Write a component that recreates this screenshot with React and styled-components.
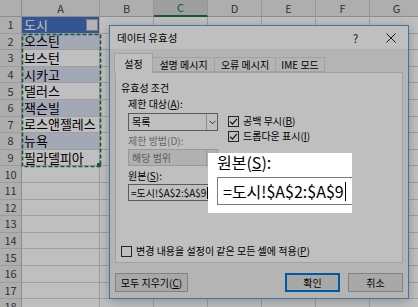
import React from 'react';
import styled, {createGlobalStyle} from 'styled-components';

const GlobalStyle = createGlobalStyle`
	html, body {
		margin: 0;
		padding: 0;
		background: #fff;
	}
	body {
		font-family: "Noto Sans CJK KR", "Noto Sans", sans-serif;
	}
`;

const cities = ['오스틴', '보스턴', '시카고', '댈러스', '잭슨빌', '로스앤젤레스', '뉴욕', '필라델피아'];
const cols = ['A', 'B', 'C', 'D', 'E', 'F', 'G'];
const ROWS = 18;

const Screen = styled.div`
	position: relative;
	width: 418px;
	height: 307px;
	overflow: hidden;
	background: #fff;
`;

const Sheet = styled.div`
	display: grid;
	grid-template-columns: 22px 78px repeat(6, 54px);
	grid-template-rows: 17px repeat(${ROWS}, 16.6px);
	line-height: 1;
`;

const Corner = styled.div`
	position: relative;
	background: #e9e9e9;
	border-right: 1px solid #bdbdbd;
	border-bottom: 1px solid #bdbdbd;
	box-sizing: border-box;

	::after {
		content: '';
		position: absolute;
		right: 3px;
		bottom: 3px;
		border-style: solid;
		border-width: 0 0 10px 10px;
		border-color: transparent transparent #b8b8b8 transparent;
	}
`;

const ColHead = styled.div`
	display: flex;
	align-items: center;
	justify-content: center;
	font-size: 11px;
	color: ${p => p.$active ? '#217346' : '#444'};
	background: ${p => p.$active ? '#d3d3d3' : '#e9e9e9'};
	border-right: 1px solid #c8c8c8;
	border-bottom: ${p => p.$active ? '2px solid #217346' : '1px solid #bdbdbd'};
	box-sizing: border-box;
`;

const RowHead = styled.div`
	display: flex;
	align-items: center;
	justify-content: center;
	font-size: 11px;
	color: #444;
	background: #e9e9e9;
	border-right: 1px solid #bdbdbd;
	border-bottom: 1px solid #d0d0d0;
	box-sizing: border-box;
`;

const bandColor = {
	head: '#4472c4',
	blue: '#d9e1f2',
	plain: '#fff'
};

const Cell = styled.div`
	position: relative;
	display: flex;
	align-items: center;
	padding-left: 2px;
	font-size: 13px;
	line-height: 14px;
	color: ${p => p.$band === 'head' ? '#fff' : '#000'};
	background: ${p => bandColor[p.$band] || '#fff'};
	border-right: 1px solid #d4d4d4;
	border-bottom: 1px solid #d4d4d4;
	box-sizing: border-box;
	white-space: nowrap;
`;

const FilterBtn = styled.span`
	position: absolute;
	right: 1px;
	top: 2px;
	width: 12px;
	height: 12px;
	box-sizing: border-box;
	background: #f0f0f0;
	border: 1px solid #a6a6a6;
	display: flex;
	align-items: center;
	justify-content: center;

	::after {
		content: '';
		border-style: solid;
		border-width: 3px 3px 0 3px;
		border-color: #555 transparent transparent transparent;
	}
`;

const Ants = styled.svg`
	position: absolute;
	left: 21px;
	top: 33px;
	z-index: 2;
`;

const Overlay = styled.div`
	position: absolute;
	inset: 0;
	background: rgba(0, 0, 0, 0.25);
	z-index: 10;
`;

/* dialog */

const Dialog = styled.div`
	position: absolute;
	left: 109px;
	top: 25px;
	width: 300px;
	height: 274px;
	box-sizing: border-box;
	border: 1px solid #5b9bd8;
	background: #f0f0f0;
	display: flex;
	flex-direction: column;
	z-index: 5;
	font-size: 10px;
	line-height: 14px;
	color: #000;
	box-shadow: 0 2px 10px rgba(0, 0, 0, 0.25);
`;

const TitleBar = styled.div`
	height: 23px;
	display: flex;
	align-items: center;
	padding-left: 7px;
	background: #fff;
	font-size: 10.5px;
`;

const Title = styled.span`
	flex: 1;
`;

const TitleBtn = styled.span`
	width: 35px;
	display: flex;
	justify-content: center;
	align-items: center;
	font-size: 11px;
	color: #222;
`;

const Body = styled.div`
	flex: 1;
	display: flex;
	flex-direction: column;
	padding: 4px 5px 6px;
`;

const Tabs = styled.div`
	display: flex;
	align-items: flex-end;
	height: 19px;
	position: relative;
	z-index: 1;
`;

const Tab = styled.div`
	width: ${p => p.$w}px;
	height: ${p => p.$active ? 20 : 15}px;
	margin-bottom: ${p => p.$active ? -1 : 0}px;
	margin-left: -1px;
	box-sizing: border-box;
	border: 1px solid #d9d9d9;
	border-bottom: ${p => p.$active ? 'none' : '1px solid #d9d9d9'};
	background: ${p => p.$active ? '#fff' : '#f0f0f0'};
	display: flex;
	align-items: center;
	justify-content: center;
	white-space: nowrap;

	:first-child {
		margin-left: 0;
	}
`;

const Panel = styled.div`
	height: 191px;
	box-sizing: border-box;
	border: 1px solid #d9d9d9;
	background: #fff;
	display: flex;
	flex-direction: column;
	padding: 8px 5px 4px;
`;

const GroupHead = styled.div`
	display: flex;
	align-items: center;
	gap: 4px;
	height: 14px;

	::after {
		content: '';
		flex: 1;
		height: 1px;
		background: #dcdcdc;
	}
`;

const Conditions = styled.div`
	display: flex;
	gap: 10px;
	padding-left: 7px;
	margin-top: 2px;
`;

const LeftCol = styled.div`
	width: 90px;
	display: flex;
	flex-direction: column;
`;

const RightCol = styled.div`
	display: flex;
	flex-direction: column;
	gap: 1px;
	padding-top: 17px;
`;

const Label = styled.div`
	height: 14px;
	line-height: 14px;
	margin-top: ${p => p.$mt || 0}px;
	color: ${p => p.$disabled ? '#8a8a8a' : '#000'};
	white-space: nowrap;
`;

const Key = styled.span`
	text-decoration: underline;
`;

const Select = styled.div`
	height: ${p => p.$h}px;
	margin-top: ${p => p.$mt || 0}px;
	box-sizing: border-box;
	border: 1px solid ${p => p.$disabled ? '#cccccc' : '#7a7a7a'};
	background: ${p => p.$disabled ? '#ececec' : '#fff'};
	color: ${p => p.$disabled ? '#7d7d7d' : '#000'};
	display: flex;
	align-items: center;
`;

const SelectText = styled.span`
	flex: 1;
	padding-left: 3px;
`;

const SelectArrow = styled.span`
	width: 10px;
	align-self: stretch;
	border-left: 1px solid ${p => p.$disabled ? '#cccccc' : '#bdbdbd'};
	display: flex;
	align-items: center;
	justify-content: center;
`;

const Input = styled.div`
	width: 200px;
	height: 17px;
	margin-top: 1px;
	box-sizing: border-box;
	border: 1px solid #7a7a7a;
	background: #fff;
	display: flex;
	align-items: center;
	padding-left: 2px;
	white-space: nowrap;
`;

const Caret = styled.span`
	display: inline-block;
	width: 1px;
	height: ${p => p.$h}px;
	background: #000;
	margin-left: 1px;
`;

const CheckRow = styled.label`
	display: flex;
	align-items: center;
	gap: 4px;
	height: 14px;
	white-space: nowrap;
	margin-top: ${p => p.$auto ? 'auto' : '0'};
`;

const Box = styled.span`
	width: 11px;
	height: 11px;
	box-sizing: border-box;
	border: 1px solid #333;
	background: #fff;
	display: flex;
	align-items: center;
	justify-content: center;
`;

const Footer = styled.div`
	display: flex;
	gap: 8px;
	margin-top: 10px;
`;

const Button = styled.div`
	width: ${p => p.$w}px;
	height: 19px;
	box-sizing: border-box;
	border: ${p => p.$primary ? '1px solid #0078d7' : '1px solid #adadad'};
	box-shadow: ${p => p.$primary ? 'inset 0 0 0 1px #0078d7' : 'none'};
	background: #e1e1e1;
	display: flex;
	align-items: center;
	justify-content: center;
	white-space: nowrap;
	margin-left: ${p => p.$push ? 'auto' : '0'};
`;

/* magnified call-out */

const Callout = styled.div`
	position: absolute;
	left: 208px;
	top: 153px;
	width: 144px;
	height: 60px;
	background: #fff;
	overflow: hidden;
	z-index: 20;
	padding-left: 9px;
	box-sizing: border-box;
`;

const CalloutLabel = styled.div`
	font-size: 16px;
	line-height: 18px;
	color: #000;
	white-space: nowrap;
`;

const CalloutInput = styled.div`
	width: 170px;
	height: 28px;
	margin-top: 6px;
	box-sizing: border-box;
	border: 1px solid #7a7a7a;
	display: flex;
	align-items: center;
	padding-left: 5px;
	font-size: 16px;
	line-height: 20px;
	white-space: nowrap;
`;

const Check = () => (
	<svg width="9" height="9" viewBox="0 0 9 9">
		<path d="M1 4.6 L3.4 7 L8 1.8" fill="none" stroke="#222" strokeWidth="1.2"/>
	</svg>
);

const Chevron = ({color}) => (
	<svg width="7" height="5" viewBox="0 0 7 5">
		<path d="M0.5 0.8 L3.5 3.8 L6.5 0.8" fill="none" stroke={color} strokeWidth="1"/>
	</svg>
);

const Close = () => (
	<svg width="10" height="10" viewBox="0 0 10 10">
		<path d="M0.5 0.5 L9.5 9.5 M9.5 0.5 L0.5 9.5" stroke="#222" strokeWidth="1"/>
	</svg>
);

const Checkbox = ({checked, children, auto}) => (
	<CheckRow $auto={auto}>
		<Box>{checked && <Check/>}</Box>
		<span>{children}</span>
	</CheckRow>
);

function cellBand(row, col) {
	if (col !== 0) return 'plain';
	if (row === 1) return 'head';
	if (row >= 2 && row <= 9) return row % 2 === 0 ? 'blue' : 'plain';
	return 'plain';
}

const SheetView = () => (
	<Sheet>
		<Corner/>
		{cols.map(c => <ColHead key={c} $active={c === 'C'}>{c}</ColHead>)}
		{Array.from({length: ROWS}, (_, i) => i + 1).map(row => (
			<React.Fragment key={row}>
				<RowHead>{row}</RowHead>
				{cols.map((c, ci) => (
					<Cell key={c} $band={cellBand(row, ci)}>
						{ci === 0 && row === 1 && <>도시<FilterBtn/></>}
						{ci === 0 && row >= 2 && row <= 9 && cities[row - 2]}
					</Cell>
				))}
			</React.Fragment>
		))}
	</Sheet>
);

export default function App() {
	return (
		<Screen>
			<GlobalStyle/>
			<SheetView/>
			<Ants width="81" height="135" viewBox="0 0 81 135">
				<rect x="1.5" y="1.5" width="78" height="132" fill="none" stroke="#217346" strokeWidth="1.6" strokeDasharray="4 2"/>
				<rect x="76" y="130" width="4" height="4" fill="#217346"/>
			</Ants>

			<Dialog>
				<TitleBar>
					<Title>데이터 유효성</Title>
					<TitleBtn>?</TitleBtn>
					<TitleBtn><Close/></TitleBtn>
				</TitleBar>
				<Body>
					<Tabs>
						<Tab $w={39} $active>설정</Tab>
						<Tab $w={63}>설명 메시지</Tab>
						<Tab $w={62}>오류 메시지</Tab>
						<Tab $w={50}>IME 모드</Tab>
					</Tabs>
					<Panel>
						<GroupHead>유효성 조건</GroupHead>
						<Conditions>
							<LeftCol>
								<Label>제한 대상(<Key>A</Key>):</Label>
								<Select $h={18} $mt={2}>
									<SelectText>목록</SelectText>
									<SelectArrow><Chevron color="#444"/></SelectArrow>
								</Select>
								<Label $mt={3} $disabled>제한 방법(D):</Label>
								<Select $h={17} $mt={1} $disabled>
									<SelectText>해당 범위</SelectText>
									<SelectArrow $disabled><Chevron color="#aaa"/></SelectArrow>
								</Select>
								<Label $mt={3}>원본(<Key>S</Key>):</Label>
								<Input>=도시!$A$2:$A$9<Caret $h={12}/></Input>
							</LeftCol>
							<RightCol>
								<Checkbox checked>공백 무시(<Key>B</Key>)</Checkbox>
								<Checkbox checked>드롭다운 표시(<Key>I</Key>)</Checkbox>
							</RightCol>
						</Conditions>
						<Checkbox auto>변경 내용을 설정이 같은 모든 셀에 적용(<Key>P</Key>)</Checkbox>
					</Panel>
					<Footer>
						<Button $w={73}>모두 지우기(<Key>C</Key>)</Button>
						<Button $w={55} $push $primary>확인</Button>
						<Button $w={55}>취소</Button>
					</Footer>
				</Body>
			</Dialog>

			<Overlay/>

			<Callout>
				<CalloutLabel>원본(<Key>S</Key>):</CalloutLabel>
				<CalloutInput>=도시!$A$2:$A$9<Caret $h={19}/></CalloutInput>
			</Callout>
		</Screen>
	);
}
